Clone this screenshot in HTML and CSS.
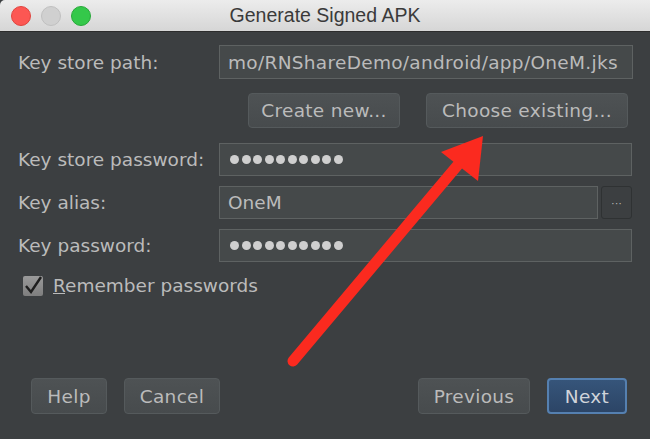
FILE: index.html
```html
<!DOCTYPE html>
<html lang="en">
<head>
    <meta charset="UTF-8">
    <title>Generate Signed APK</title>
    <link rel="stylesheet" href="styles.css">
</head>
<body>
    <div class="window">
        <div class="titlebar">
            <div class="lights">
                <span class="light red"></span>
                <span class="light gray"></span>
                <span class="light green"></span>
            </div>
            <div class="title">Generate Signed APK</div>
        </div>

        <div class="content">
            <div class="row first">
                <label class="label">Key store path:</label>
                <div class="field path">mo/RNShareDemo/android/app/OneM.jks</div>
            </div>

            <div class="store-buttons">
                <button class="btn create">Create new...</button>
                <button class="btn choose">Choose existing...</button>
            </div>

            <div class="row pw-row">
                <label class="label">Key store password:</label>
                <div class="field dots">
                    <span></span><span></span><span></span><span></span><span></span>
                    <span></span><span></span><span></span><span></span><span></span>
                </div>
            </div>

            <div class="row">
                <label class="label">Key alias:</label>
                <div class="alias-wrap">
                    <div class="field">OneM</div>
                    <button class="browse">&middot;&middot;&middot;</button>
                </div>
            </div>

            <div class="row">
                <label class="label">Key password:</label>
                <div class="field dots">
                    <span></span><span></span><span></span><span></span><span></span>
                    <span></span><span></span><span></span><span></span><span></span>
                </div>
            </div>

            <div class="remember">
                <span class="checkbox">
                    <svg width="20" height="20" viewBox="0 0 20 20">
                        <path d="M3 10 L8 16 L18 1" fill="none" stroke="#1e1e1e" stroke-width="2.4"/>
                    </svg>
                </span>
                <span class="remember-text"><u>R</u>emember passwords</span>
            </div>
        </div>

        <div class="footer">
            <div class="footer-left">
                <button class="btn help">Help</button>
                <button class="btn cancel">Cancel</button>
            </div>
            <div class="footer-right">
                <button class="btn previous">Previous</button>
                <button class="btn next">Next</button>
            </div>
        </div>

        <svg class="arrow" width="650" height="439" viewBox="0 0 650 439">
            <line x1="293" y1="361" x2="462" y2="160" stroke="#fb2a1f" stroke-width="11" stroke-linecap="round"/>
            <polygon points="483,136 441,152 478,181" fill="#fb2a1f"/>
        </svg>
    </div>
</body>
</html>
```

FILE: styles.css
```css
html, body {
    margin: 0;
    padding: 0;
    background: #3c3f41;
}
body {
    font-family: "DejaVu Sans", "Liberation Sans", sans-serif;
    color: #bbbbbb;
}
.window {
    position: relative;
    width: 650px;
    height: 439px;
    background: #3c3f41;
    overflow: hidden;
}
.titlebar {
    position: relative;
    height: 31px;
    background: linear-gradient(#ececec, #d6d6d6);
    border-bottom: 1px solid #2c2c2c;
    border-top-left-radius: 5px;
    display: flex;
    align-items: center;
}
.lights {
    display: flex;
    gap: 10px;
    padding-left: 11px;
}
.light {
    width: 18px;
    height: 18px;
    border-radius: 50%;
    display: block;
}
.red { background: #fc5753; border: 0.5px solid #e0443e; }
.gray { background: #d0d0d0; border: 0.5px solid #c0c0c0; }
.green { background: #34c84a; border: 0.5px solid #28a83a; }
.title {
    position: absolute;
    left: 0;
    right: 0;
    text-align: center;
    font-family: "Liberation Sans", sans-serif;
    font-size: 19.5px;
    color: #3a3a3a;
}
.content {
    padding: 13px 18px 0 18px;
}
.row {
    display: grid;
    grid-template-columns: 201px 1fr;
    align-items: center;
    margin-top: 10px;
}
.row.first {
    margin-top: 0;
}
.row.pw-row {
    margin-top: 15px;
}
.label {
    font-size: 18.5px;
    color: #bbbbbb;
}
.field {
    height: 33px;
    box-sizing: border-box;
    border: 1px solid #5e6262;
    background: #45494a;
    font-size: 18.5px;
    color: #bbbbbb;
    display: flex;
    align-items: center;
    padding-left: 8px;
}
.first .field {
    height: 34px;
    margin-right: -1px;
}
.path {
    letter-spacing: 0.3px;
    white-space: nowrap;
    overflow: hidden;
}
.dots {
    gap: 2.5px;
    padding-left: 10px;
}
.dots span {
    width: 9px;
    height: 9px;
    border-radius: 50%;
    background: #cfcfcf;
}
.alias-wrap {
    display: flex;
    gap: 3px;
}
.alias-wrap .field {
    flex: 1;
}
.browse {
    width: 31px;
    height: 33px;
    border: 1px solid #2f3233;
    background: #3c3f41;
    border-radius: 3px;
    color: #bbbbbb;
    font-size: 11px;
    padding: 0;
}
.store-buttons {
    display: flex;
    justify-content: flex-end;
    gap: 26px;
    margin-top: 14px;
    padding-right: 4px;
}
.btn {
    height: 35px;
    box-sizing: border-box;
    border: 1px solid #555a5c;
    border-radius: 4px;
    background: linear-gradient(#4e5254, #474b4d);
    color: #bbbbbb;
    font-family: "DejaVu Sans", "Liberation Sans", sans-serif;
    font-size: 18.5px;
    letter-spacing: 0.3px;
    padding: 0;
}
.create { width: 152px; }
.choose { width: 202px; }
.remember {
    display: flex;
    align-items: center;
    gap: 10px;
    margin-top: 13px;
    padding-left: 5px;
}
.checkbox {
    width: 20px;
    height: 20px;
    background: linear-gradient(#9a9a9a, #7e7e7e);
    border-radius: 2px;
    display: block;
}
.checkbox svg {
    display: block;
}
.remember-text {
    font-size: 18.5px;
}
.footer {
    position: absolute;
    left: 31px;
    right: 23px;
    top: 378px;
    display: flex;
    justify-content: space-between;
}
.footer-left, .footer-right {
    display: flex;
    gap: 17px;
}
.help { width: 76px; height: 36px; }
.cancel { width: 96px; height: 36px; }
.previous { width: 112px; height: 36px; }
.next {
    width: 80px;
    height: 36px;
    background: linear-gradient(#36557a, #2c4566);
    border: 2px solid #5580b0;
    color: #d0d4da;
}
.arrow {
    position: absolute;
    left: 0;
    top: 0;
    pointer-events: none;
}
```
